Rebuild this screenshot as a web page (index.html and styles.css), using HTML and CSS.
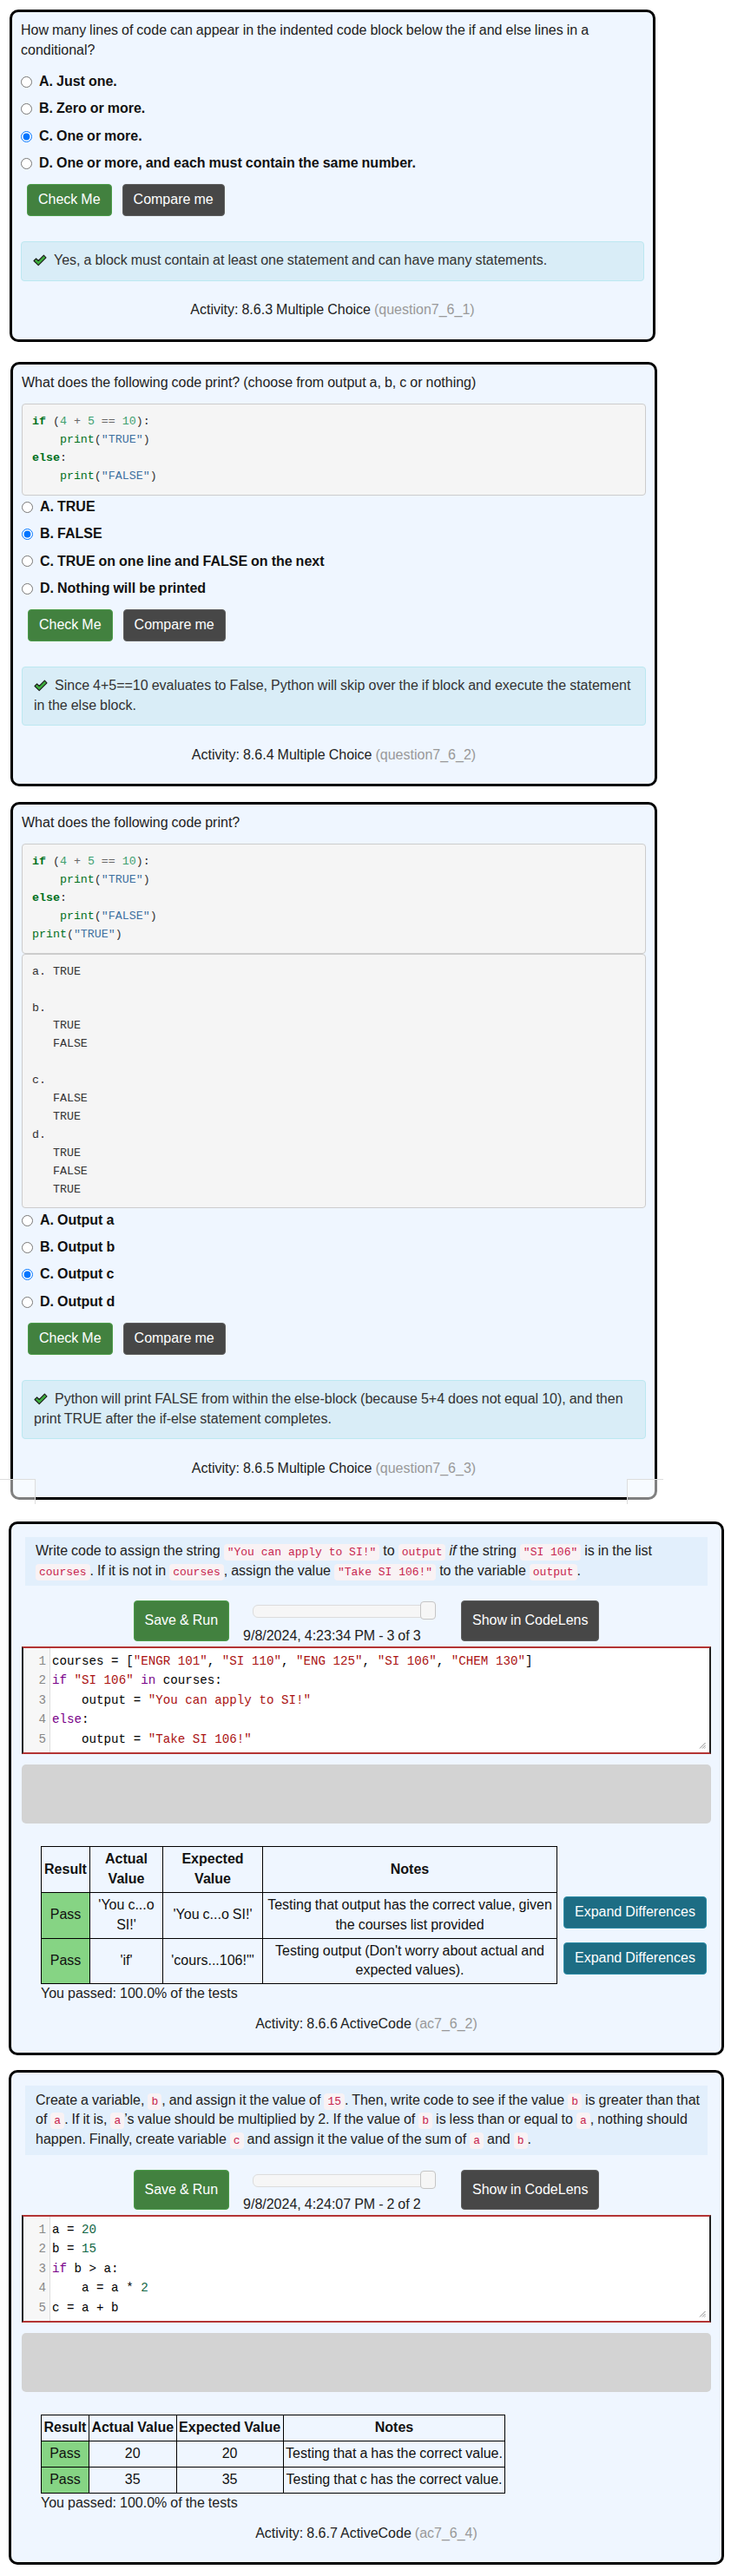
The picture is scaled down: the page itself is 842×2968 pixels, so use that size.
FILE: index.html
```html
<!DOCTYPE html>
<html lang="en">
<head>
<meta charset="utf-8">
<title>8.6 Conditionals</title>
<link rel="stylesheet" href="styles.css">
</head>
<body>

<div class="card mc mc-1">
  <p class="question">How many lines of code can appear in the indented code block below the if and else lines in a conditional?</p>
  <div class="options">
    <label class="opt"><input type="radio" name="q1"> A. Just one.</label>
    <label class="opt"><input type="radio" name="q1"> B. Zero or more.</label>
    <label class="opt"><input type="radio" name="q1" checked> C. One or more.</label>
    <label class="opt"><input type="radio" name="q1"> D. One or more, and each must contain the same number.</label>
  </div>
  <div class="mc-buttons">
    <button class="btn btn-green">Check Me</button>
    <button class="btn btn-dark">Compare me</button>
  </div>
  <div class="feedback"><svg class="ok" viewBox="0 0 16 14" width="16" height="14"><path d="M1 7.5 L3.6 4.9 L6.2 7.5 L12.4 1.2 L15 3.8 L6.2 12.6 Z" fill="#3dae3d" stroke="#1b1b1b" stroke-width="1.1" stroke-linejoin="round"/></svg>Yes, a block must contain at least one statement and can have many statements.</div>
  <div class="activity">Activity: 8.6.3 Multiple Choice <span class="aid">(question7_6_1)</span></div>
</div>

<div class="card mc mc-2">
  <p class="question">What does the following code print? (choose from output a, b, c or nothing)</p>
  <pre class="pre"><span class="k">if</span> (<span class="mi">4</span> <span class="o">+</span> <span class="mi">5</span> <span class="o">==</span> <span class="mi">10</span>):
    <span class="nb">print</span>(<span class="s">"TRUE"</span>)
<span class="k">else</span>:
    <span class="nb">print</span>(<span class="s">"FALSE"</span>)</pre>
  <div class="options after-pre">
    <label class="opt"><input type="radio" name="q2"> A. TRUE</label>
    <label class="opt"><input type="radio" name="q2" checked> B. FALSE</label>
    <label class="opt"><input type="radio" name="q2"> C. TRUE on one line and FALSE on the next</label>
    <label class="opt"><input type="radio" name="q2"> D. Nothing will be printed</label>
  </div>
  <div class="mc-buttons">
    <button class="btn btn-green">Check Me</button>
    <button class="btn btn-dark">Compare me</button>
  </div>
  <div class="feedback"><svg class="ok" viewBox="0 0 16 14" width="16" height="14"><path d="M1 7.5 L3.6 4.9 L6.2 7.5 L12.4 1.2 L15 3.8 L6.2 12.6 Z" fill="#3dae3d" stroke="#1b1b1b" stroke-width="1.1" stroke-linejoin="round"/></svg>Since 4+5==10 evaluates to False, Python will skip over the if block and execute the statement in the else block.</div>
  <div class="activity">Activity: 8.6.4 Multiple Choice <span class="aid">(question7_6_2)</span></div>
</div>

<div class="card mc mc-3">
  <p class="question">What does the following code print?</p>
  <pre class="pre"><span class="k">if</span> (<span class="mi">4</span> <span class="o">+</span> <span class="mi">5</span> <span class="o">==</span> <span class="mi">10</span>):
    <span class="nb">print</span>(<span class="s">"TRUE"</span>)
<span class="k">else</span>:
    <span class="nb">print</span>(<span class="s">"FALSE"</span>)
<span class="nb">print</span>(<span class="s">"TRUE"</span>)</pre>
  <pre class="pre pre-plain">a. TRUE

b.
   TRUE
   FALSE

c.
   FALSE
   TRUE
d.
   TRUE
   FALSE
   TRUE</pre>
  <div class="options after-pre">
    <label class="opt"><input type="radio" name="q3"> A. Output a</label>
    <label class="opt"><input type="radio" name="q3"> B. Output b</label>
    <label class="opt"><input type="radio" name="q3" checked> C. Output c</label>
    <label class="opt"><input type="radio" name="q3"> D. Output d</label>
  </div>
  <div class="mc-buttons">
    <button class="btn btn-green">Check Me</button>
    <button class="btn btn-dark">Compare me</button>
  </div>
  <div class="feedback"><svg class="ok" viewBox="0 0 16 14" width="16" height="14"><path d="M1 7.5 L3.6 4.9 L6.2 7.5 L12.4 1.2 L15 3.8 L6.2 12.6 Z" fill="#3dae3d" stroke="#1b1b1b" stroke-width="1.1" stroke-linejoin="round"/></svg>Python will print FALSE from within the else-block (because 5+4 does not equal 10), and then print TRUE after the if-else statement completes.</div>
  <div class="activity">Activity: 8.6.5 Multiple Choice <span class="aid">(question7_6_3)</span></div>
  <div class="veil veil-left"></div>
  <div class="veil veil-right"></div>
</div>

<div class="card ac ac-1">
  <div class="desc">Write code to assign the string <code>"You can apply to SI!"</code> to <code>output</code> <em>if</em> the string <code>"SI 106"</code> is in the list <code>courses</code>. If it is not in <code>courses</code>, assign the value <code>"Take SI 106!"</code> to the variable <code>output</code>.</div>
  <div class="controls">
    <button class="btn btn-green btn-big">Save &amp; Run</button>
    <div class="hist">
      <div class="slider"><span class="handle"></span></div>
      <div class="stamp">9/8/2024, 4:23:34 PM - 3 of 3</div>
    </div>
    <button class="btn btn-dark btn-big">Show in CodeLens</button>
  </div>
  <div class="editor">
    <div class="gutter">1<br>2<br>3<br>4<br>5</div>
    <pre class="cm">courses = [<span class="cs">"ENGR 101"</span>, <span class="cs">"SI 110"</span>, <span class="cs">"ENG 125"</span>, <span class="cs">"SI 106"</span>, <span class="cs">"CHEM 130"</span>]
<span class="ck">if</span> <span class="cs">"SI 106"</span> <span class="ck">in</span> courses:
    output = <span class="cs">"You can apply to SI!"</span>
<span class="ck">else</span>:
    output = <span class="cs">"Take SI 106!"</span></pre>
    <svg class="grip" viewBox="0 0 8 8" width="8" height="8"><path d="M7.5 1 L1 7.5 M7.5 4 L4 7.5 M7.5 6.5 L6.5 7.5" stroke="#888" stroke-width="1"/></svg>
  </div>
  <div class="out"></div>
  <div class="results">
    <table class="tests t-wide">
      <tr><th>Result</th><th>Actual Value</th><th>Expected Value</th><th>Notes</th></tr>
      <tr><td class="pass">Pass</td><td>'You c...o SI!'</td><td>'You c...o SI!'</td><td>Testing that output has the correct value, given the courses list provided</td></tr>
      <tr><td class="pass">Pass</td><td>'if'</td><td>'cours...106!"'</td><td>Testing output (Don't worry about actual and expected values).</td></tr>
    </table>
    <div class="diffs">
      <button class="btn btn-info">Expand Differences</button>
      <button class="btn btn-info">Expand Differences</button>
    </div>
  </div>
  <div class="passed">You passed: 100.0% of the tests</div>
  <div class="activity activity-ac">Activity: 8.6.6 ActiveCode <span class="aid">(ac7_6_2)</span></div>
</div>

<div class="card ac ac-2">
  <div class="desc">Create a variable, <code>b</code>, and assign it the value of <code>15</code>. Then, write code to see if the value <code>b</code> is greater than that of <code>a</code>. If it is, <code>a</code>’s value should be multiplied by 2. If the value of <code>b</code> is less than or equal to <code>a</code>, nothing should happen. Finally, create variable <code>c</code> and assign it the value of the sum of <code>a</code> and <code>b</code>.</div>
  <div class="controls">
    <button class="btn btn-green btn-big">Save &amp; Run</button>
    <div class="hist">
      <div class="slider"><span class="handle"></span></div>
      <div class="stamp">9/8/2024, 4:24:07 PM - 2 of 2</div>
    </div>
    <button class="btn btn-dark btn-big">Show in CodeLens</button>
  </div>
  <div class="editor">
    <div class="gutter">1<br>2<br>3<br>4<br>5</div>
    <pre class="cm">a = <span class="cn">20</span>
b = <span class="cn">15</span>
<span class="ck">if</span> b &gt; a:
    a = a * <span class="cn">2</span>
c = a + b</pre>
    <svg class="grip" viewBox="0 0 8 8" width="8" height="8"><path d="M7.5 1 L1 7.5 M7.5 4 L4 7.5 M7.5 6.5 L6.5 7.5" stroke="#888" stroke-width="1"/></svg>
  </div>
  <div class="out"></div>
  <div class="results">
    <table class="tests">
      <tr><th>Result</th><th>Actual Value</th><th>Expected Value</th><th>Notes</th></tr>
      <tr><td class="pass">Pass</td><td>20</td><td>20</td><td>Testing that a has the correct value.</td></tr>
      <tr><td class="pass">Pass</td><td>35</td><td>35</td><td>Testing that c has the correct value.</td></tr>
    </table>
  </div>
  <div class="passed">You passed: 100.0% of the tests</div>
  <div class="activity activity-ac">Activity: 8.6.7 ActiveCode <span class="aid">(ac7_6_4)</span></div>
</div>

</body>
</html>
```

FILE: styles.css
```css
* { box-sizing: border-box; }

body {
  margin: 0;
  padding: 0 0 13px;
  background: #fff;
  font-family: "Liberation Sans", Arial, sans-serif;
  font-size: 16px;
  line-height: 1.42857;
  word-spacing: -0.45px;
  color: #222;
}

/* ---------- cards ---------- */
.card {
  border: 3px solid #000;
  border-radius: 10px;
  background: #eff6ff;
}

.mc { padding: 10px 10px 0; }
.mc-1 { margin: 11px 0 0 11px; width: 744px; }
.mc-2 { margin: 23.5px 0 0 12px; width: 745px; }
.mc-3 { margin: 18px 0 0 12px; width: 745px; position: relative; }

.ac { padding: 15px 12px 0; }
.ac-1 { margin: 24.5px 0 0 10px; width: 824px; }
.ac-2 { margin: 17px 0 0 10px; width: 824px; }

.question { margin: 0 0 9px; }

/* ---------- code blocks ---------- */
.pre {
  margin: 12px 0 0;
  padding: 10px 11px;
  background: #f5f5f5;
  border: 1px solid #ccc;
  border-radius: 4px;
  font-family: "Liberation Mono", "DejaVu Sans Mono", monospace;
  font-size: 13.3px;
  line-height: 20.9px;
  word-spacing: 0;
  color: #333;
  white-space: pre;
}
.pre + .pre { margin-top: 0; }
.pre-plain { color: #333; }
.k { color: #007020; font-weight: bold; }
.nb { color: #007020; }
.mi { color: #40a070; }
.s { color: #4070a0; }
.o { color: #666; }

/* ---------- options ---------- */
.options.after-pre { margin-top: -2px; }
.opt {
  display: flex;
  align-items: center;
  padding: 4.25px 0;
  font-weight: bold;
  color: #111;
}
.opt input {
  margin: 0 8px 0 0;
  width: 13px;
  height: 13px;
}

/* ---------- buttons ---------- */
.btn {
  font-family: "Liberation Sans", Arial, sans-serif;
  font-size: 16px;
  line-height: 1.42857;
  padding: 6px 12px;
  border: 1px solid transparent;
  border-radius: 4px;
  color: #fff;
  white-space: nowrap;
  word-spacing: -0.45px;
}
.btn-green { background: #42813f; border-color: #4c9c4a; }
.btn-dark { background: #474747; border-color: #5e5e5e; }
.btn-info { background: #1d6d84; border-color: #2a8ba6; }
.btn-big { padding: 11px 12px; }

.mc-buttons {
  display: flex;
  gap: 12px;
  margin-top: 8px;
  padding-left: 7px;
}

/* ---------- feedback ---------- */
.feedback {
  margin-top: 29px;
  padding: 10.5px 12px 10.5px 13px;
  background: #d9edf7;
  border: 1px solid #bce8f1;
  border-radius: 4px;
  color: #333;
}
.ok { vertical-align: -2px; margin-right: 8px; }

.activity {
  margin: 22.5px 0 21.5px;
  text-align: center;
  color: #222;
}
.aid { color: #999; }

/* ---------- overlay squares on card 3 ---------- */
.veil {
  position: absolute;
  bottom: -8px;
  height: 29px;
  background: rgba(255, 255, 255, 0.5);
  border-top: 1px solid #ddd;
}
.veil-left { left: -15px; width: 41px; border-right: 1px solid #ddd; }
.veil-right { right: -10px; width: 42px; border-left: 1px solid #ddd; }

/* ---------- activecode ---------- */
.desc {
  margin: 0 4px;
  padding: 5.5px 0 5.5px 12px;
  background: #e2effc;
}
.desc code {
  font-family: "Liberation Mono", "DejaVu Sans Mono", monospace;
  font-size: 13px;
  padding: 2px 4px;
  word-spacing: 0;
  color: #c7254e;
  background: #f9f2f4;
  border-radius: 4px;
}

.controls {
  display: flex;
  justify-content: center;
  align-items: flex-start;
  margin-top: 17px;
}
.hist {
  width: 225px;
  margin: 1px 26px 0 16px;
}
.slider {
  position: relative;
  width: 211px;
  height: 21px;
  margin-left: 11px;
}
.slider::before {
  content: "";
  position: absolute;
  left: 0;
  right: 0;
  top: 4px;
  height: 13px;
  background: #f6f6f6;
  border: 1px solid #dcdcdc;
  border-radius: 6px;
}
.handle {
  position: absolute;
  right: 0;
  top: 0;
  width: 18px;
  height: 21px;
  background: #f6f6f6;
  border: 1px solid #c5c5c5;
  border-radius: 4px;
}
.stamp { margin-top: 7.5px; color: #222; white-space: nowrap; }

.editor {
  position: relative;
  display: flex;
  background: #fff;
  border: 2px solid #222;
  border-top-color: #b33434;
  border-bottom-color: #b33434;
}
.gutter {
  width: 31px;
  flex: none;
  padding: 4px 4px 4px 0;
  background: #f7f7f7;
  border-right: 1px solid #ddd;
  text-align: right;
  color: #888;
  font-family: "Liberation Mono", "DejaVu Sans Mono", monospace;
  font-size: 14.2px;
  line-height: 22.5px;
}
.cm {
  margin: 0;
  padding: 4px 0 4px 2px;
  font-family: "Liberation Mono", "DejaVu Sans Mono", monospace;
  font-size: 14.2px;
  line-height: 22.5px;
  word-spacing: 0;
  color: #000;
  white-space: pre;
}
.cs { color: #a11; }
.ck { color: #708; }
.cn { color: #164; }
.grip { position: absolute; right: 4px; bottom: 4px; }

.out {
  margin-top: 12px;
  height: 68px;
  background: #d3d3d3;
  border-radius: 5px;
}

.results {
  display: flex;
  align-items: flex-start;
  margin: 26px 0 0 22px;
}
.tests {
  border-collapse: collapse;
  color: #111;
}
.tests th, .tests td {
  border: 1px solid #000;
  padding: 3px 2.5px;
  text-align: center;
  vertical-align: middle;
}
.tests th { font-weight: bold; }
.t-wide { table-layout: fixed; width: 594px; }
.t-wide th:nth-child(1) { width: 56px; }
.t-wide th:nth-child(2) { width: 84px; }
.t-wide th:nth-child(3) { width: 115px; }
.t-wide th:nth-child(4) { width: 339px; }
.pass { background: #86d484; }

.diffs {
  display: flex;
  flex-direction: column;
  gap: 16px;
  padding-top: 58px;
  margin-left: 7px;
}

.passed { margin-left: 22px; color: #222; }
.activity-ac { margin: 12px 0 21px; }
```
